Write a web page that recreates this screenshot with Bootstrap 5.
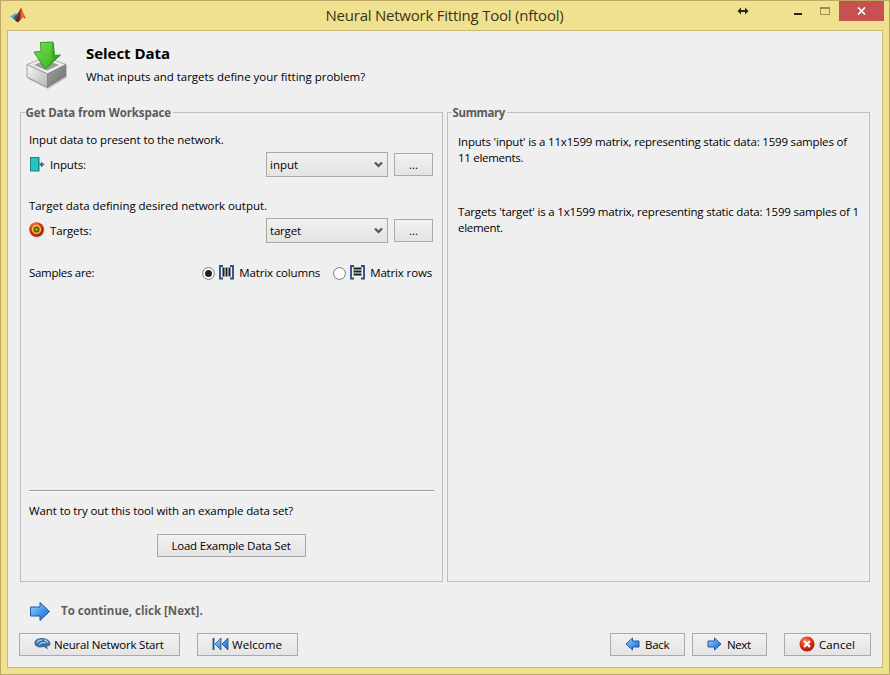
<!DOCTYPE html>
<html lang="en">
<head>
<meta charset="utf-8">
<meta name="viewport" content="width=device-width, initial-scale=1">
<title>Neural Network Fitting Tool (nftool)</title>
<link href="https://cdn.jsdelivr.net/npm/bootstrap@5.3.0/dist/css/bootstrap.min.css" rel="stylesheet">
<style>
body{font-family:"Open Sans","Noto Sans",sans-serif;font-size:11.5px;line-height:16px;color:#000;background:#f0e190;overflow:hidden}
svg{display:block;flex:none}
.tool-window{width:890px;height:675px;border:1px solid #bcaa62;background:#f0e190;padding:0 6px 6px}
.title-bar{height:29px}
.title-text{font-size:15px;line-height:29px;letter-spacing:-.23px;color:#3a3517;flex:1;text-align:center;padding-left:129px}
.win-controls{width:151px;margin-right:-1px;height:20px}
.close-btn{width:45px;height:20px;background:#c75050}
.client{height:638px;border:1px solid #c8ba76;background:#efefef;padding:0 12px}
.heading{height:81px;padding:10px 0 0 6px}
.heading h1{font-size:15px;line-height:20px;font-weight:700;letter-spacing:-.04px;margin:2px 0 6px}
.heading-text{margin-left:18px}
.panes{height:470px;gap:4px}
.pane{border:1px solid #bfbfbf;height:470px;padding:0 8px}
.pane-data{width:423px}
.pane-title{font-weight:700;color:#5c5c5c;height:14px;line-height:14px;margin:-7px 0 0 -4px;padding:0 2px 0 .5px;background:#efefef;align-self:flex-start}
.line-row{height:20px;line-height:20px}
.field-row{height:26px;margin-top:2px}
.combo{width:122px;height:25px;border:1px solid #a9a9a9;background:linear-gradient(#f0f0f0,#e4e4e4);padding:0 4px 0 3px;margin-bottom:1px}
.tool-btn{border:1px solid #a9a9a9;background:linear-gradient(#f1f1f1,#e4e4e4);height:23px;border-radius:0;color:#000;font-size:11.5px;line-height:16px;padding:0}
.more-btn{width:39px;margin:0 1px 1px 6px}
.rule{border-top:1px solid #9c9c9c;border-bottom:1px solid #fdfdfd;height:2px;margin-top:207px}
.radio-dot{width:13px;height:13px}
.radio-text{margin-left:5px}
.matrix-icon{margin:0 0 2px 4px}
.summary-a{margin-top:14px;padding-left:2px}
.summary-b{margin-top:38px;padding-left:2px}
.footer-note{height:20px;color:#5f5f5f;font-weight:700;margin-top:19px;padding-left:9px}
.footer-bar{margin:12px -1px 0}
.icon-up{margin-bottom:2px}
.k0{letter-spacing:-.03px}.k1{letter-spacing:-.1px}.k05{letter-spacing:-.05px}.k15{letter-spacing:-.15px}.k2{letter-spacing:-.19px}.k3{letter-spacing:-.3px}.k4{letter-spacing:-.38px}.kp{letter-spacing:.08px}
</style>
</head>
<body>
<svg width="0" height="0" class="position-absolute" aria-hidden="true">
  <defs>
    <linearGradient id="blue" x1="0" y1="0" x2="1" y2="1"><stop offset="0" stop-color="#a6d6ff"/><stop offset=".5" stop-color="#4a9cec"/><stop offset="1" stop-color="#1b60bd"/></linearGradient>
    <linearGradient id="green" x1="0" y1="0" x2="1" y2="1"><stop offset="0" stop-color="#7be04f"/><stop offset="1" stop-color="#2fae18"/></linearGradient>
    <linearGradient id="sideL" x1="0" y1="0" x2="1" y2="1"><stop offset="0" stop-color="#f8f8f8"/><stop offset="1" stop-color="#b4b4b4"/></linearGradient>
    <linearGradient id="sideR" x1="0" y1="0" x2="1" y2="1"><stop offset="0" stop-color="#a2a2a2"/><stop offset="1" stop-color="#6c6c6c"/></linearGradient>
    <radialGradient id="red" cx=".4" cy=".3" r=".7"><stop offset="0" stop-color="#ff8a66"/><stop offset=".5" stop-color="#e23516"/><stop offset="1" stop-color="#a81a06"/></radialGradient>
    <linearGradient id="flame" x1="0" y1="0" x2="1" y2="0"><stop offset="0" stop-color="#3c1418"/><stop offset=".45" stop-color="#a32a18"/><stop offset=".65" stop-color="#f08128"/><stop offset="1" stop-color="#b5301c"/></linearGradient>
  </defs>
</svg>
<div class="tool-window">
  <header class="title-bar d-flex align-items-start">
    <svg style="margin:4px 0 0 3px" width="17" height="20" viewBox="0 0 17 20"><path d="M0 11.500 6 8l2 3-3 4z" fill="#63a9cf"/><path d="M3 13 8 8l3-5-2 8-4 4z" fill="#2c5c8c"/><path d="M5 15.500C8 12 9 6 11 2.500c2 2.500 2.500 7 5 11l-3-1-5 5z" fill="url(#flame)"/></svg>
    <div class="title-text text-nowrap">Neural Network Fitting Tool (nftool)</div>
    <div class="win-controls d-flex">
      <svg width="106" height="20" viewBox="0 0 106 20"><path d="M4.500 10 8 6.500V9h4V6.500l3.500 3.500-3.500 3.500V11H8v2.500z" fill="#2b2812"/><path d="M61 12h8v2h-8z" fill="#2b2812"/><path d="M87.500 6.500h9v7h-9z" fill="none" stroke="#998c4c"/><path d="M87 6h10v2H87z" fill="#998c4c"/></svg>
      <div class="close-btn d-flex align-items-center justify-content-center"><svg width="9" height="8" viewBox="0 0 9 8"><path d="M1 .5l7 7M8 .5l-7 7" stroke="#fff" stroke-width="1.700"/></svg></div>
    </div>
  </header>
  <main class="client">
    <section class="heading d-flex">
      <svg width="42" height="50" viewBox="0 0 42 50">
        <path d="M2 36 22 46.500 41 35v1.500L22 48 2 38z" fill="#c4c4c4"/>
        <path d="M1 23.500 20 16 40 23.500 21.500 33z" fill="#ececec" stroke="#999" stroke-width=".8"/>
        <path d="M8 24 20 19 33 24 21 29.500z" fill="#9b9b9b"/>
        <path d="M1 23.500l20.500 9.500v13.500L1 36z" fill="url(#sideL)" stroke="#8d8d8d" stroke-width=".8"/>
        <path d="M40 23.500 21.500 33v13.500L40 35z" fill="url(#sideR)" stroke="#808080" stroke-width=".8"/>
        <path d="M14.500 1.500 27 1l1.500 13.500 6-.5-15.500 14L8 11l7-.5z" fill="url(#green)" stroke="#2a8e1d" stroke-width=".9"/>
        <path d="M26 2l2 .5.500 12 5.500.5-14 12 8-10-2.500-.5z" fill="#25901a" opacity=".5"/>
      </svg>
      <div class="heading-text text-nowrap"><h1>Select Data</h1><div class="k0">What inputs and targets define your fitting problem?</div></div>
    </section>
    <section class="panes d-flex">
      <div class="pane pane-data d-flex flex-column text-nowrap">
        <div class="pane-title k1">Get Data from Workspace</div>
        <div class="line-row k1" style="margin-top:10px">Input data to present to the network.</div>
        <div class="field-row d-flex align-items-center">
          <svg class="icon-up" width="17" height="17" viewBox="0 0 17 17"><path d="M1 1h9.500v14.500H1z" fill="#18877f"/><path d="M2 2h7v12.500H2z" fill="#22c6be"/><path d="M10.500 7.300h1.500V5.500L15.500 8.500 12 11.500V9.700h-1.500z" fill="#2b7c80"/></svg>
          <span class="k15 ps-1">Inputs:</span>
          <div class="combo d-flex align-items-center justify-content-between ms-auto"><span>input</span><svg width="9" height="7" viewBox="0 0 9 7"><path d="M1 1.500l3.500 3.500L8 1.500" fill="none" stroke="#555" stroke-width="2.200"/></svg></div>
          <button class="btn tool-btn more-btn">...</button>
        </div>
        <div class="line-row k05" style="margin-top:18px">Target data defining desired network output.</div>
        <div class="field-row d-flex align-items-center">
          <svg class="icon-up" width="17" height="16" viewBox="0 0 17 16"><circle cx="8.200" cy="8.500" r="7.300" fill="#999" opacity=".5"/><circle cx="7.500" cy="7.500" r="7.300" fill="url(#red)"/><circle cx="7.500" cy="7.500" r="3.900" fill="#4c5a1c" stroke="#f3c52f" stroke-width="1.600"/><circle cx="7.500" cy="7.500" r="1.300" fill="#d8b23a"/></svg>
          <span class="k15 ps-1">Targets:</span>
          <div class="combo d-flex align-items-center justify-content-between ms-auto"><span class="k2">target</span><svg width="9" height="7" viewBox="0 0 9 7"><path d="M1 1.500l3.500 3.500L8 1.500" fill="none" stroke="#555" stroke-width="2.200"/></svg></div>
          <button class="btn tool-btn more-btn">...</button>
        </div>
        <div class="line-row d-flex align-items-center" style="margin-top:19px">
          <span class="k3">Samples are:</span>
          <svg class="ms-auto radio-dot" viewBox="0 0 13 13"><circle cx="6.500" cy="6.500" r="5.900" fill="#fff" stroke="#777"/><circle cx="6.500" cy="6.500" r="3.500" fill="#222"/></svg>
          <svg class="matrix-icon" width="15" height="15" viewBox="0 0 15 15"><path d="M4 1H1v12.500h3M11 1h3v12.500h-3" fill="none" stroke="#294a80" stroke-width="1.800"/><path d="M4.500 2.500v9M7.500 2.500v9M10.500 2.500v9" stroke="#222" stroke-width="2"/></svg>
          <span class="k15 radio-text">Matrix columns</span>
          <svg class="radio-dot" style="margin-left:13px" viewBox="0 0 13 13"><circle cx="6.500" cy="6.500" r="5.900" fill="#fff" stroke="#777"/></svg>
          <svg class="matrix-icon" width="15" height="15" viewBox="0 0 15 15"><path d="M4 1H1v12.500h3M11 1h3v12.500h-3" fill="none" stroke="#294a80" stroke-width="1.800"/><path d="M3.500 3.500h8M3.500 6.500h8M3.500 9.500h8" stroke="#222" stroke-width="1.900"/></svg>
          <span class="k15 radio-text" style="margin-right:2px">Matrix rows</span>
        </div>
        <div class="rule"></div>
        <div class="line-row k1" style="margin-top:9px">Want to try out this tool with an example data set?</div>
        <button class="btn tool-btn align-self-center k2" style="width:149px;margin:13px 1px 0 0">Load Example Data Set</button>
      </div>
      <div class="pane d-flex flex-column text-nowrap flex-grow-1">
        <div class="pane-title k4">Summary</div>
        <div class="summary-a"><div class="k2">Inputs 'input' is a 11x1599 matrix, representing static data: 1599 samples of</div><div class="k3">11 elements.</div></div>
        <div class="summary-b"><div class="k2">Targets 'target' is a 1x1599 matrix, representing static data: 1599 samples of 1</div><div class="k3">element.</div></div>
      </div>
    </section>
    <div class="footer-note d-flex align-items-center">
      <svg width="22" height="21" viewBox="0 0 22 21"><path d="M1.500 6h9.500V1.500l9.500 9-9.500 9V15H1.500z" fill="url(#blue)" stroke="#2359a6"/></svg>
      <span style="margin-left:10px">To continue, click [Next].</span>
    </div>
    <footer class="footer-bar d-flex">
      <button class="btn tool-btn d-flex align-items-center" style="width:161px;padding-left:14px"><svg class="icon-up" width="17" height="14" viewBox="0 0 17 14"><path d="M.5 7C0 3 4 1 8 1c5 0 9 3 8.500 6.500 0 1-2.500 2-3.500 2L14 12.500l-4-2.500C5 11 1.500 10 .5 7z" fill="#3f6f9f"/><path d="M3 6c1-3 3-3 5-3M5 8c2-3 4-3 7-2M10 3c2 0 3 1 4 3" fill="none" stroke="#9cc8ea" stroke-width="1.300"/></svg><span class="k2" style="margin-left:3px">Neural Network Start</span></button>
      <button class="btn tool-btn d-flex align-items-center" style="width:101px;margin-left:17px;padding-left:14px"><svg class="icon-up" width="17" height="14" viewBox="0 0 17 14"><path d="M1.500 1v12" stroke="#244f86" stroke-width="1.800"/><path d="M9 1v12L3 7zM16 1v12l-6-6z" fill="url(#blue)" stroke="#244f86" stroke-width=".8"/></svg><span class="kp" style="margin-left:3px">Welcome</span></button>
      <button class="btn tool-btn d-flex align-items-center ms-auto" style="width:75px;padding-left:14px"><svg class="icon-up" width="15" height="14" viewBox="0 0 15 14"><path d="M14 4H7.500V1L1 7l6.500 6v-3H14z" fill="url(#blue)" stroke="#2359a6"/></svg><span class="k3" style="margin-left:5px">Back</span></button>
      <button class="btn tool-btn d-flex align-items-center" style="width:75px;margin-left:7px;padding-left:14px"><svg class="icon-up" width="15" height="14" viewBox="0 0 15 14"><path d="M1 4h6.500V1L14 7l-6.500 6v-3H1z" fill="url(#blue)" stroke="#2359a6"/></svg><span class="k4" style="margin-left:5px">Next</span></button>
      <button class="btn tool-btn d-flex align-items-center" style="width:87px;margin-left:17px;padding-left:14px"><svg class="icon-up" width="16" height="16" viewBox="0 0 16 16"><circle cx="8" cy="8" r="7.500" fill="url(#red)"/><path d="M5 5l6 6M11 5l-6 6" stroke="#fff" stroke-width="2.400"/></svg><span class="kp ms-1">Cancel</span></button>
    </footer>
  </main>
</div>
</body>
</html>
